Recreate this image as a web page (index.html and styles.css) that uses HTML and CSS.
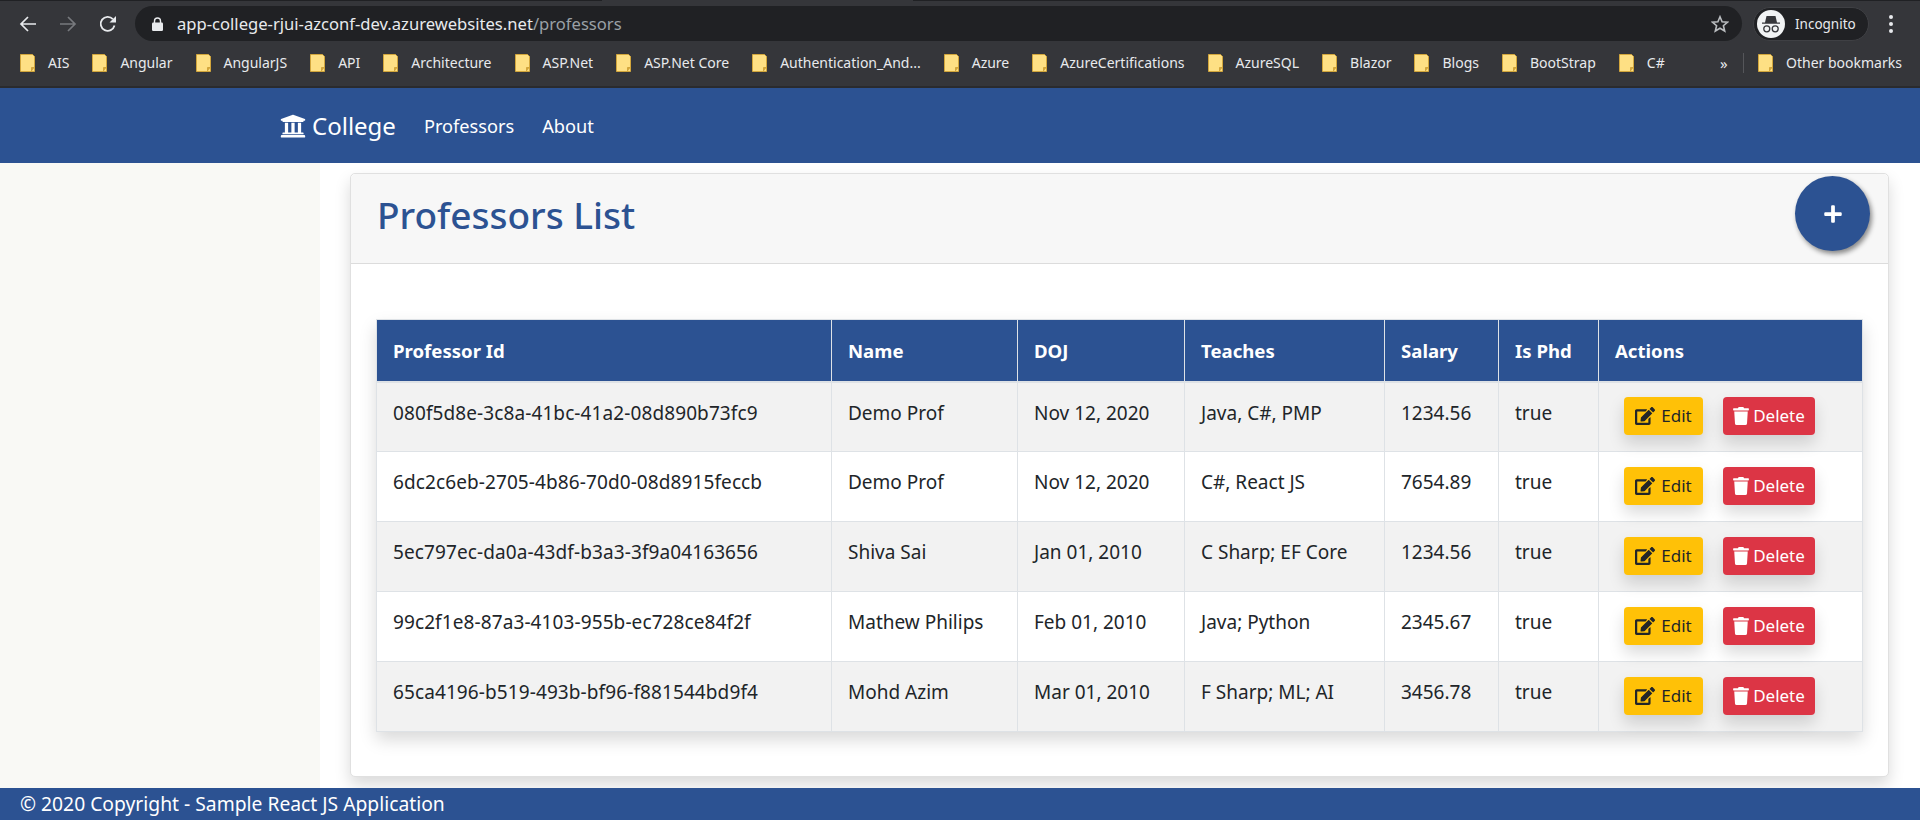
FILE: index.html
```html
<!DOCTYPE html>
<html lang="en">
<head>
    <meta charset="UTF-8">
    <meta name="viewport" content="width=device-width, initial-scale=1.0">
    <title>Professors List</title>
    <link rel="stylesheet" href="styles.css">
</head>
<body>
    <svg class="icon-defs" aria-hidden="true">
        <symbol id="i-folder" viewBox="0 0 15 18">
            <path d="M.5.5h12l2 2v15H.5z" fill="#fee084" stroke="#d2a63c"/>
            <path d="M14.500 13.500h-3v4" fill="#d2a63c" stroke="#d2a63c"/>
        </symbol>
        <symbol id="i-university" viewBox="0 0 512 512">
            <path d="M496 128v16a8 8 0 0 1-8 8h-24v12c0 6.627-5.373 12-12 12H60c-6.627 0-12-5.373-12-12v-12H24a8 8 0 0 1-8-8v-16a8 8 0 0 1 4.941-7.392l232-88a7.996 7.996 0 0 1 6.118 0l232 88A8 8 0 0 1 496 128zm-24 304H40c-13.255 0-24 10.745-24 24v16a8 8 0 0 0 8 8h464a8 8 0 0 0 8-8v-16c0-13.255-10.745-24-24-24zM96 192v192H60c-6.627 0-12 5.373-12 12v20h416v-20c0-6.627-5.373-12-12-12h-36V192h-64v192h-64V192h-64v192h-64V192H96z"/>
        </symbol>
        <symbol id="i-edit" viewBox="0 0 576 512">
            <path d="M402.6 83.2l90.2 90.2c3.8 3.8 3.8 10 0 13.8L274.4 405.6l-92.8 10.3c-12.4 1.4-22.9-9.1-21.5-21.5l10.3-92.8L388.8 83.2c3.8-3.8 10-3.8 13.8 0zm162-22.9l-48.8-48.8c-15.2-15.2-39.9-15.2-55.2 0l-35.4 35.4c-3.8 3.8-3.8 10 0 13.8l90.2 90.2c3.8 3.8 10 3.8 13.8 0l35.4-35.4c15.2-15.3 15.2-40 0-55.2zM384 346.2V448H64V128h229.8c3.2 0 6.2-1.3 8.5-3.5l40-40c7.6-7.6 2.2-20.5-8.5-20.5H48C21.5 64 0 85.5 0 112v352c0 26.5 21.5 48 48 48h352c26.5 0 48-21.5 48-48V306.2c0-10.7-12.9-16-20.5-8.5l-40 40c-2.2 2.3-3.5 5.3-3.5 8.5z"/>
        </symbol>
        <symbol id="i-trash" viewBox="0 0 448 512">
            <path d="M432 32H312l-9.4-18.7A24 24 0 0 0 281.1 0H166.8a23.72 23.72 0 0 0-21.4 13.3L136 32H16A16 16 0 0 0 0 48v32a16 16 0 0 0 16 16h416a16 16 0 0 0 16-16V48a16 16 0 0 0-16-16zM53.2 467a48 48 0 0 0 47.9 45h245.8a48 48 0 0 0 47.9-45L416 128H32z"/>
        </symbol>
    </svg>

    <div class="browser">
        <div class="toolbar">
            <svg class="tool-icon" viewBox="0 0 18 18"><path d="M17 9H2M9 2L2 9l7 7" fill="none" stroke="#e8eaed" stroke-width="1.700"/></svg>
            <svg class="tool-icon" viewBox="0 0 18 18"><path d="M1 9h15M9 2l7 7-7 7" fill="none" stroke="#77797d" stroke-width="1.700"/></svg>
            <svg class="tool-icon" viewBox="0 0 18 18"><path d="M15.500 10.500a7 7 0 1 1-1.600-6.400" fill="none" stroke="#e8eaed" stroke-width="1.800"/><path d="M17 1v6.500h-6.500z" fill="#e8eaed"/></svg>
            <div class="address-bar">
                <svg class="lock" viewBox="0 0 11 14"><path d="M2.500 6V4a3 3 0 0 1 6 0v2" fill="none" stroke="#e8eaed" stroke-width="1.400"/><rect y="5.500" width="11" height="8.500" rx="1.200" fill="#e8eaed"/></svg>
                <span class="url">app-college-rjui-azconf-dev.azurewebsites.net<span class="url-path">/professors</span></span>
                <svg class="star" viewBox="0 0 18 18"><path d="M9 1.800l2.100 5 5.400.4-4.100 3.500 1.300 5.300L9 13.200 4.300 16l1.300-5.300-4.100-3.500 5.400-.4z" fill="none" stroke="#b9bcbf" stroke-width="1.600"/></svg>
            </div>
            <div class="profile">
                <svg class="avatar" viewBox="0 0 28 28">
                    <circle cx="14" cy="14" r="14" fill="#f1f3f4"/>
                    <path d="M9.500 6h9l1.500 6.500h3v1.300H5v-1.300h3z" fill="#35363a"/>
                    <circle cx="9.800" cy="18.800" r="3" fill="none" stroke="#35363a" stroke-width="1.300"/>
                    <circle cx="18.200" cy="18.800" r="3" fill="none" stroke="#35363a" stroke-width="1.300"/>
                </svg>
                <span>Incognito</span>
            </div>
            <div class="menu-dots"><i></i><i></i><i></i></div>
        </div>
        <div class="bookmarks">
            <div class="bookmark-list">
                <a class="bookmark"><svg><use href="#i-folder"/></svg>AIS</a>
                <a class="bookmark"><svg><use href="#i-folder"/></svg>Angular</a>
                <a class="bookmark"><svg><use href="#i-folder"/></svg>AngularJS</a>
                <a class="bookmark"><svg><use href="#i-folder"/></svg>API</a>
                <a class="bookmark"><svg><use href="#i-folder"/></svg>Architecture</a>
                <a class="bookmark"><svg><use href="#i-folder"/></svg>ASP.Net</a>
                <a class="bookmark"><svg><use href="#i-folder"/></svg>ASP.Net Core</a>
                <a class="bookmark"><svg><use href="#i-folder"/></svg>Authentication_And...</a>
                <a class="bookmark"><svg><use href="#i-folder"/></svg>Azure</a>
                <a class="bookmark"><svg><use href="#i-folder"/></svg>AzureCertifications</a>
                <a class="bookmark"><svg><use href="#i-folder"/></svg>AzureSQL</a>
                <a class="bookmark"><svg><use href="#i-folder"/></svg>Blazor</a>
                <a class="bookmark"><svg><use href="#i-folder"/></svg>Blogs</a>
                <a class="bookmark"><svg><use href="#i-folder"/></svg>BootStrap</a>
                <a class="bookmark"><svg><use href="#i-folder"/></svg>C#</a>
            </div>
            <span class="more">»</span>
            <span class="separator"></span>
            <a class="bookmark"><svg><use href="#i-folder"/></svg>Other bookmarks</a>
        </div>
    </div>

    <nav class="navbar">
        <a class="brand"><svg class="brand-icon"><use href="#i-university"/></svg>College</a>
        <a class="nav-link">Professors</a>
        <a class="nav-link">About</a>
    </nav>

    <main class="main">
        <aside class="sidebar"></aside>
        <section class="content">
            <div class="card">
                <div class="card-header">
                    <h1>Professors List</h1>
                    <button class="fab">
                        <svg viewBox="0 0 448 512"><path d="M416 208H272V64c0-17.670-14.330-32-32-32h-32c-17.670 0-32 14.330-32 32v144H32c-17.670 0-32 14.330-32 32v32c0 17.670 14.330 32 32 32h144v144c0 17.670 14.330 32 32 32h32c17.670 0 32-14.330 32-32V304h144c17.670 0 32-14.330 32-32v-32c0-17.670-14.330-32-32-32z"/></svg>
                    </button>
                </div>
                <div class="card-body">
                    <table class="prof-table">
                        <colgroup>
                            <col class="col-id"><col class="col-name"><col class="col-doj"><col class="col-teaches"><col class="col-salary"><col class="col-phd"><col>
                        </colgroup>
                        <thead>
                            <tr><th>Professor Id</th><th>Name</th><th>DOJ</th><th>Teaches</th><th>Salary</th><th>Is Phd</th><th>Actions</th></tr>
                        </thead>
                        <tbody>
                            <tr>
                                <td>080f5d8e-3c8a-41bc-41a2-08d890b73fc9</td><td>Demo Prof</td><td>Nov 12, 2020</td><td>Java, C#, PMP</td><td>1234.56</td><td>true</td>
                                <td class="actions"><div class="action-btns"><button class="btn btn-edit"><svg><use href="#i-edit"/></svg>Edit</button><button class="btn btn-delete"><svg><use href="#i-trash"/></svg>Delete</button></div></td>
                            </tr>
                            <tr>
                                <td>6dc2c6eb-2705-4b86-70d0-08d8915feccb</td><td>Demo Prof</td><td>Nov 12, 2020</td><td>C#, React JS</td><td>7654.89</td><td>true</td>
                                <td class="actions"><div class="action-btns"><button class="btn btn-edit"><svg><use href="#i-edit"/></svg>Edit</button><button class="btn btn-delete"><svg><use href="#i-trash"/></svg>Delete</button></div></td>
                            </tr>
                            <tr>
                                <td>5ec797ec-da0a-43df-b3a3-3f9a04163656</td><td>Shiva Sai</td><td>Jan 01, 2010</td><td>C Sharp; EF Core</td><td>1234.56</td><td>true</td>
                                <td class="actions"><div class="action-btns"><button class="btn btn-edit"><svg><use href="#i-edit"/></svg>Edit</button><button class="btn btn-delete"><svg><use href="#i-trash"/></svg>Delete</button></div></td>
                            </tr>
                            <tr>
                                <td>99c2f1e8-87a3-4103-955b-ec728ce84f2f</td><td>Mathew Philips</td><td>Feb 01, 2010</td><td>Java; Python</td><td>2345.67</td><td>true</td>
                                <td class="actions"><div class="action-btns"><button class="btn btn-edit"><svg><use href="#i-edit"/></svg>Edit</button><button class="btn btn-delete"><svg><use href="#i-trash"/></svg>Delete</button></div></td>
                            </tr>
                            <tr>
                                <td>65ca4196-b519-493b-bf96-f881544bd9f4</td><td>Mohd Azim</td><td>Mar 01, 2010</td><td>F Sharp; ML; AI</td><td>3456.78</td><td>true</td>
                                <td class="actions"><div class="action-btns"><button class="btn btn-edit"><svg><use href="#i-edit"/></svg>Edit</button><button class="btn btn-delete"><svg><use href="#i-trash"/></svg>Delete</button></div></td>
                            </tr>
                        </tbody>
                    </table>
                </div>
            </div>
        </section>
    </main>

    <footer class="footer">© 2020 Copyright - Sample React JS Application</footer>
</body>
</html>
```

FILE: styles.css
```css
* {
    box-sizing: border-box;
}
html, body {
    height: 100%;
}
body {
    display: flex;
    flex-direction: column;
    height: 830px;
    margin: 0;
    padding-bottom: 10px;
    overflow: hidden;
    font-family: "Noto Sans", "Open Sans", sans-serif;
    color: #212529;
    background-color: #fff;
}
.icon-defs {
    display: none;
}

/* browser chrome */
.browser {
    flex: 0 0 88px;
    background-color: #35363a;
    background-image: linear-gradient(to right, #202124 602px, transparent 602px, transparent 913px, #202124 913px);
    background-size: 100% 1px;
    background-repeat: no-repeat;
    border-bottom: 2px solid #2a2b2e;
    color: #e8eaed;
}
.toolbar {
    display: flex;
    align-items: center;
    height: 41px;
    padding: 6px 0 0 19px;
}
.tool-icon {
    width: 18px;
    height: 18px;
    margin-right: 22px;
    flex: none;
}
.address-bar {
    display: flex;
    align-items: center;
    width: 1607px;
    height: 35px;
    margin-left: -4px;
    padding: 0 13px 0 17px;
    background-color: #202124;
    border-radius: 18px;
}
.lock {
    width: 11px;
    height: 14px;
    flex: none;
}
.url {
    margin-left: 14px;
    font-size: 16.6px;
    white-space: nowrap;
}
.url-path {
    color: #9aa0a6;
}
.star {
    width: 18px;
    height: 18px;
    margin-left: auto;
}
.profile {
    display: flex;
    align-items: center;
    gap: 10px;
    width: 116px;
    height: 34px;
    margin-left: 11px;
    padding-left: 3px;
    border: 1px solid #3f4044;
    background-color: #202124;
    border-radius: 17px;
    font-size: 13.5px;
}
.avatar {
    width: 28px;
    height: 28px;
    flex: none;
}
.menu-dots {
    display: flex;
    flex-direction: column;
    gap: 3px;
    margin-left: 20px;
}
.menu-dots i {
    width: 4px;
    height: 4px;
    border-radius: 50%;
    background-color: #e8eaed;
}
.bookmarks {
    display: flex;
    align-items: center;
    height: 45px;
    padding: 0 18px 2px 20px;
    font-size: 14px;
}
.bookmark-list {
    display: flex;
    gap: 23px;
    width: 1693px;
}
.bookmark {
    display: flex;
    align-items: center;
    gap: 13px;
    white-space: nowrap;
}
.bookmark svg {
    width: 15px;
    height: 18px;
    flex: none;
}
.more {
    width: 23px;
    margin-left: 7px;
    font-size: 15px;
}
.separator {
    width: 1px;
    height: 20px;
    background-color: #55565a;
    margin-right: 14px;
}

/* app */
.navbar {
    flex: 0 0 75px;
    display: flex;
    align-items: center;
    padding-left: 280px;
    background-color: #2c5292;
    color: #fff;
}
.brand {
    display: flex;
    align-items: center;
    gap: 6px;
    font-size: 24px;
    margin-right: 28px;
}
.brand-icon {
    width: 26px;
    height: 26px;
    fill: #fff;
}
.nav-link {
    font-size: 18.2px;
    margin-right: 28px;
}
.main {
    flex: 1;
    display: flex;
    min-height: 0;
}
.sidebar {
    flex: 0 0 320px;
    background-color: #f9f9f5;
}
.content {
    flex: 1;
    padding: 10px 31px 11px 30px;
}
.card {
    height: 100%;
    border: 1px solid #e0e0e0;
    border-radius: 5px;
    background-color: #fff;
    box-shadow: 0 8px 16px rgba(0,0,0,0.15);
}
.card-header {
    display: flex;
    justify-content: space-between;
    align-items: flex-start;
    height: 90px;
    padding: 2px 18px 0 26px;
    background-color: #f7f7f7;
    border-bottom: 1px solid #dcdcdc;
    border-radius: 5px 5px 0 0;
}
.card-header h1 {
    margin: 15px 0 0;
    font-size: 37px;
    font-weight: 500;
    line-height: 48px;
    color: #2c5292;
}
.fab {
    display: flex;
    align-items: center;
    justify-content: center;
    width: 75px;
    height: 75px;
    border: 0;
    border-radius: 50%;
    background-color: #2c5292;
    box-shadow: 2px 3px 5px rgba(0,0,0,0.45);
}
.fab svg {
    width: 18px;
    height: 20px;
    fill: #fff;
}
.card-body {
    padding: 55px 25px 0;
}
.prof-table {
    width: 100%;
    table-layout: fixed;
    border-collapse: collapse;
    box-shadow: 0 8px 16px rgba(0,0,0,0.15);
    font-size: 19px;
}
.col-id { width: 455px; }
.col-name { width: 186px; }
.col-doj { width: 167px; }
.col-teaches { width: 200px; }
.col-salary { width: 114px; }
.col-phd { width: 100px; }
.prof-table th {
    height: 62px;
    padding: 0 16px;
    text-align: left;
    font-size: 18.6px;
    font-weight: 700;
    color: #fff;
    background-color: #2c5292;
    border: 1px solid #dee2e6;
    border-bottom-width: 2px;
}
.prof-table td {
    height: 70px;
    padding: 17px 16px 0;
    vertical-align: top;
    border: 1px solid #dee2e6;
    white-space: nowrap;
}
.prof-table td:first-child {
    letter-spacing: 0.1px;
}
.prof-table tbody tr:nth-child(odd) {
    background-color: #f2f2f2;
}
.prof-table td.actions {
    padding: 0 0 2px 25px;
    vertical-align: middle;
}
.action-btns {
    display: flex;
    gap: 20px;
}
.btn {
    display: flex;
    align-items: center;
    justify-content: center;
    height: 38px;
    padding: 0;
    border: 0;
    border-radius: 4px;
    font-family: inherit;
    font-size: 17px;
    box-shadow: 0 8px 16px rgba(0,0,0,0.15);
}
.btn svg {
    height: 18px;
    fill: currentColor;
}
.btn-edit {
    gap: 6px;
    width: 79px;
    background-color: #ffc107;
    color: #212529;
}
.btn-edit svg {
    width: 20px;
}
.btn-delete {
    gap: 4px;
    width: 92px;
    background-color: #dc3545;
    color: #fff;
}
.btn-delete svg {
    width: 16px;
}
.footer {
    flex: 0 0 32px;
    padding-left: 20px;
    line-height: 32px;
    font-size: 19.3px;
    color: #fff;
    background-color: #2c5292;
}
```
